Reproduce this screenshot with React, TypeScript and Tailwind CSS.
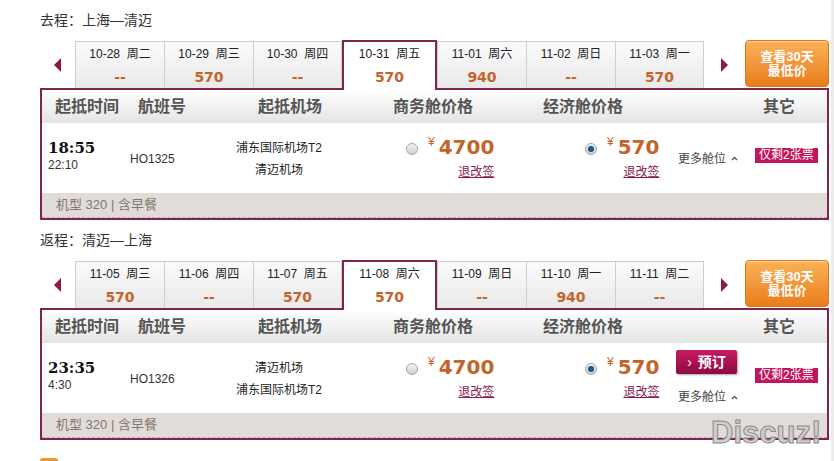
import React from 'react';

type DateTab = { date: string; week: string; price: string };

interface Trip {
  title: string;
  tabs: DateTab[];
  selected: number;
  depart: string;
  arrive: string;
  flightNo: string;
  airports: [string, string];
  showBook: boolean;
}

const TRIPS: Trip[] = [
  {
    title: '去程：上海—清迈',
    tabs: [
      { date: '10-28', week: '周二', price: '--' },
      { date: '10-29', week: '周三', price: '570' },
      { date: '10-30', week: '周四', price: '--' },
      { date: '10-31', week: '周五', price: '570' },
      { date: '11-01', week: '周六', price: '940' },
      { date: '11-02', week: '周日', price: '--' },
      { date: '11-03', week: '周一', price: '570' },
    ],
    selected: 3,
    depart: '18:55',
    arrive: '22:10',
    flightNo: 'HO1325',
    airports: ['浦东国际机场T2', '清迈机场'],
    showBook: false,
  },
  {
    title: '返程：清迈—上海',
    tabs: [
      { date: '11-05', week: '周三', price: '570' },
      { date: '11-06', week: '周四', price: '--' },
      { date: '11-07', week: '周五', price: '570' },
      { date: '11-08', week: '周六', price: '570' },
      { date: '11-09', week: '周日', price: '--' },
      { date: '11-10', week: '周一', price: '940' },
      { date: '11-11', week: '周二', price: '--' },
    ],
    selected: 3,
    depart: '23:35',
    arrive: '4:30',
    flightNo: 'HO1326',
    airports: ['清迈机场', '浦东国际机场T2'],
    showBook: true,
  },
];

function Radio({ checked }: { checked?: boolean }) {
  return (
    <span className="mt-[4px] flex h-[12px] w-[12px] items-center justify-center rounded-full border border-[#a5a5a5] bg-gradient-to-b from-[#f4f4f4] to-[#cfcfcf]">
      {checked && <span className="h-[6px] w-[6px] rounded-full bg-[#1d5a86] shadow-[0_0_1px_#7fb4d8]" />}
    </span>
  );
}

function Price({ amount, checked }: { amount: string; checked?: boolean }) {
  return (
    <div className="inline-flex flex-col items-end pt-[12px]">
      <div className="flex h-[24px] items-center">
        <Radio checked={checked} />
        <span className="ml-[10px] self-start pt-[1px] text-[12px] leading-none text-[#c3652b]">¥</span>
        <span className="ml-[4px] font-['DejaVu_Sans'] text-[20px] font-bold leading-[24px] text-[#c3652b]">{amount}</span>
      </div>
      <a className="mt-[5px] text-[12px] leading-[16px] text-[#8a1a4f] underline">退改签</a>
    </div>
  );
}

function TabRow({ tabs, selected }: { tabs: DateTab[]; selected: number }) {
  return (
    <div className="flex h-[48px] items-end">
      <div className="flex h-full w-[35px] items-center pl-[14px] pt-[2px]">
        <span className="h-0 w-0 border-y-[7px] border-r-[7px] border-y-transparent border-r-[#8b1a4b]" />
      </div>
      {tabs.map((t, i) =>
        i === selected ? (
          <div
            key={i}
            className="relative z-10 -mb-[2px] h-[50px] w-[95px] border-2 border-b-0 border-[#7f2350] bg-white pt-[3px] text-center"
          >
            <div className="text-[12px] leading-[18px] text-[#222]">
              {t.date}&nbsp;&nbsp;{t.week}
            </div>
            <div className="mt-[5px] font-['DejaVu_Sans'] text-[14px] font-bold leading-[18px] text-[#c3652b]">{t.price}</div>
          </div>
        ) : (
          <div
            key={i}
            className={`h-[47px] w-[89px] border-l border-t border-[#cfcfcf] bg-gradient-to-b from-[#fbfbfb] to-[#e9e9e9] pt-[3px] text-center ${
              i === selected - 1 || i === tabs.length - 1 ? 'border-r' : ''
            }`}
          >
            <div className="text-[12px] leading-[18px] text-[#222]">
              {t.date}&nbsp;&nbsp;{t.week}
            </div>
            <div className="mt-[5px] font-['DejaVu_Sans'] text-[14px] font-bold leading-[18px] text-[#c3652b]">{t.price}</div>
          </div>
        ),
      )}
      <div className="flex h-full w-[41px] items-center pl-[17px] pt-[2px]">
        <span className="h-0 w-0 border-y-[7px] border-l-[7px] border-y-transparent border-l-[#8b1a4b]" />
      </div>
      <button className="flex h-[47px] w-[84px] flex-col items-center justify-center self-start rounded-[4px] border border-[#d9761a] bg-gradient-to-b from-[#f9b157] to-[#e97d17] text-[13px] font-bold leading-[14px] text-white shadow-[inset_0_1px_0_#fcd29a]">
        <span>查看30天</span>
        <span>最低价</span>
      </button>
    </div>
  );
}

function MoreSeats() {
  return (
    <span className="flex items-center text-[12px] leading-[16px] text-[#444]">
      更多舱位
      <svg width="7" height="5" viewBox="0 0 7 5" className="ml-[5px]">
        <path d="M1 4 L3.5 1.5 L6 4" fill="none" stroke="#555" strokeWidth="1.3" />
      </svg>
    </span>
  );
}

function FlightPanel({ trip }: { trip: Trip }) {
  return (
    <div className="border-2 border-[#7f2350]">
      {/* header */}
      <div className="flex h-[33px] items-center bg-gradient-to-b from-white to-[#e4e4e4] pl-[13px] text-[16px] font-bold text-[#555]">
        <span className="w-[83px]">起抵时间</span>
        <span className="w-[120px]">航班号</span>
        <span className="w-[135px]">起抵机场</span>
        <span className="w-[150px]">商务舱价格</span>
        <span className="w-[220px]">经济舱价格</span>
        <span>其它</span>
      </div>

      {/* flight row */}
      <div className="flex h-[70px] bg-white pl-[6px]">
        <div className="w-[82px] pt-[15px]">
          <div className="font-['DejaVu_Serif'] text-[15px] font-bold leading-[20px] text-[#111]">{trip.depart}</div>
          <div className="text-[12px] leading-[14px] text-[#333]">{trip.arrive}</div>
        </div>
        <div className="w-[95px] self-center pt-[1px] text-[12px] text-[#333]">{trip.flightNo}</div>
        <div className="w-[108px] pt-[14px] text-center text-[12px] leading-[22px] text-[#222]">
          <div>{trip.airports[0]}</div>
          <div>{trip.airports[1]}</div>
        </div>
        <div className="w-[73px]" />
        <div className="w-[179px]">
          <Price amount="4700" />
        </div>
        <div className="w-[91px]">
          <Price amount="570" checked />
        </div>
        <div className="w-[79px]">
          {trip.showBook ? (
            <div className="pt-[7px]">
              <button className="flex h-[24px] w-[61px] items-center justify-center rounded-[2px] bg-gradient-to-b from-[#c91a63] to-[#8c0c40] text-[14px] font-bold text-white shadow-[1px_1px_2px_rgba(0,0,0,0.35)]">
                <span className="mr-[6px] font-normal">›</span>预订
              </button>
              <div className="mt-[15px] pl-[2px]">
                <MoreSeats />
              </div>
            </div>
          ) : (
            <div className="flex h-full items-center pl-[2px] pt-[1px]">
              <MoreSeats />
            </div>
          )}
        </div>
        <div className="pt-[25px]">
          <span className="block bg-[#c2165c] px-[4px] text-[12px] leading-[15px] text-white">仅剩2张票</span>
        </div>
      </div>

      {/* footer */}
      <div className="flex h-[25px] items-center border-b border-dashed border-[#cfa3b9] bg-[#e1dcd8] pl-[14px] text-[13px] text-[#83786f]">
        机型 320 | 含早餐
      </div>
    </div>
  );
}

export default function App() {
  return (
    <div className="relative h-[461px] overflow-hidden bg-white font-['Liberation_Sans','Noto_Sans_CJK_SC',sans-serif]">
      <div className="ml-[40px] w-[789px]">
        {TRIPS.map((trip, i) => (
          <div key={i}>
            <div className="flex h-[40px] items-center text-[14px] text-[#333]">{trip.title}</div>
            <TabRow tabs={trip.tabs} selected={trip.selected} />
            <FlightPanel trip={trip} />
          </div>
        ))}
        <div className="mt-[18px] h-[18px] w-[18px] rounded-[3px] bg-[#f0962a]" />
      </div>

      {/* scrollbar edge */}
      <div className="absolute right-0 top-0 h-full w-[3px] bg-[#ececec]" />

      {/* watermark */}
      <div className="absolute left-[711px] top-[417px] font-['Liberation_Sans'] text-[31px] font-bold leading-none text-[#cfcfcf] [-webkit-text-stroke:1px_#8a8a8a]">
        Discuz!
      </div>
    </div>
  );
}
